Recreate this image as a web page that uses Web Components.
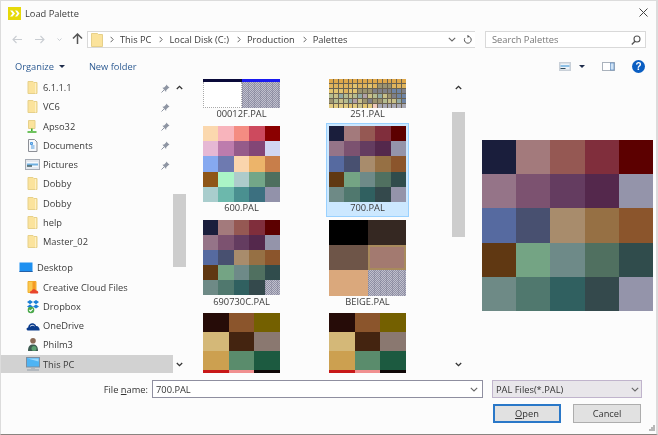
<!DOCTYPE html>
<html>
<head>
<meta charset="utf-8">
<title>Load Palette</title>
<style>
    html, body { margin: 0; padding: 0; background: #fff; }
    body { font-family: "Open Sans", "Noto Sans", sans-serif; }
</style>
</head>
<body>
<file-dialog>
    <dialog-title slot="title">Load Palette</dialog-title>
    <nav-bar slot="nav"></nav-bar>
    <tool-bar slot="tools"></tool-bar>
    <nav-tree slot="tree">
        <tree-row icon="folder" pin>6.1.1.1</tree-row>
        <tree-row icon="folder" pin>VC6</tree-row>
        <tree-row icon="share" pin>Apso32</tree-row>
        <tree-row icon="docs" pin>Documents</tree-row>
        <tree-row icon="pics" pin>Pictures</tree-row>
        <tree-row icon="folder">Dobby</tree-row>
        <tree-row icon="folder">Dobby</tree-row>
        <tree-row icon="folder">help</tree-row>
        <tree-row icon="folder">Master_02</tree-row>
        <tree-row icon="desktop" top>Desktop</tree-row>
        <tree-row icon="cloudfiles">Creative Cloud Files</tree-row>
        <tree-row icon="dropbox">Dropbox</tree-row>
        <tree-row icon="onedrive">OneDrive</tree-row>
        <tree-row icon="user">Philm3</tree-row>
        <tree-row icon="pc" selected>This PC</tree-row>
    </nav-tree>
    <scroll-bar slot="treebar" before="104" size="73"></scroll-bar>
    <pal-list slot="list">
        <pal-item kind="bars">00012F.PAL</pal-item>
        <pal-item kind="swatch251">251.PAL</pal-item>
        <pal-item kind="p600">600.PAL</pal-item>
        <pal-item kind="p700" selected>700.PAL</pal-item>
        <pal-item kind="p690">690730C.PAL</pal-item>
        <pal-item kind="beige">BEIGE.PAL</pal-item>
        <pal-item kind="earth"></pal-item>
        <pal-item kind="earth"></pal-item>
    </pal-list>
    <scroll-bar slot="listbar" before="22" size="125"></scroll-bar>
    <pal-preview slot="preview" kind="p700"></pal-preview>
    <dialog-footer slot="footer"></dialog-footer>
</file-dialog>

<script>
"use strict";

// all the small inline icons, keyed by name.
const folder = (x = 0) => `<path d="M${x + 1.5} 1.5h5l1 1h3v11h-9z" fill="#fbe39c" stroke="#e6d08a"/><path d="M${x + 9} 3v10.5" stroke="#fdf0c4"/>`;
const ICONS = {
    folder: `<svg viewBox="0 0 14 15" width="14" height="15">${folder(.5)}</svg>`,
    share: `<svg viewBox="0 0 14 15" width="14" height="15"><path d="M2.500 1.500h6.500v8h-6.500z" fill="#fbe39c" stroke="#e6d08a"/><path d="M5.800 9.500v2.500M1.500 13h9" stroke="#3fae2a" stroke-width="1.600" fill="none"/></svg>`,
    docs: `<svg viewBox="0 0 14 15" width="14" height="15"><path d="M2.500 1.500h6l2.500 2.500v9.500h-8.500z" fill="#f6f8fb" stroke="#8c8f96"/><path d="M4.500 4.500h2v2h-2zM5 8h3.500M5 10h3.500" stroke="#4f9be0" fill="#9cc8f0"/></svg>`,
    pics: `<svg viewBox="0 0 16 13" width="16" height="13"><rect x=".5" y="1.500" width="14" height="10" fill="#e4e8ee" stroke="#a5abb4"/><rect x="2" y="4" width="11" height="5" fill="#f5f8fb"/><path d="M2 6.500h11" stroke="#6fb0e0" stroke-width="2"/><path d="M2 8h5" stroke="#3c5a60" stroke-width="1.500"/></svg>`,
    desktop: `<svg viewBox="0 0 14 11" width="14" height="11"><rect x=".5" y=".5" width="13" height="9.500" fill="#1e90f0"/><path d="M.5 9.500h13" stroke="#2460a8"/></svg>`,
    cloudfiles: `<svg viewBox="0 0 14 15" width="14" height="15"><path d="M2 1.500h8v11h-8z" fill="#fbc94f" stroke="#f0b030"/><path d="M6.500 2l3-1v11h-3z" fill="#f59a23"/><path d="M5 13.500c-1.500 0-1.500-2.500.5-2.500 .5-2 3.500-2.500 4.500-.5 2-.5 3.500 3 1 3z" fill="#e8452c"/></svg>`,
    dropbox: `<svg viewBox="0 0 14 15" width="14" height="15"><path d="M4 1l3 2-3 2.200L1 3zM10 1l3 2-3 2.200L7 3zM4 5.400l3 2-3 2.100-3-2.100zM10 5.400l3 2-3 2.100-3-2.100z" fill="#1a7fd6"/><circle cx="5" cy="11" r="3.300" fill="#4aa84a"/><path d="M3.300 11l1.300 1.200 2.200-2.400" fill="none" stroke="#fff" stroke-width="1.100"/></svg>`,
    onedrive: `<svg viewBox="0 0 14 10" width="14" height="10"><path d="M1.500 9.500c-1.500-.5-1.200-3 .6-3 .3-2.800 3-5 5.600-4 1.300.4 2 1.300 2.400 2.400 2.200-.3 4 2.800 3.400 4.600z" fill="#0c3c8c"/><path d="M4 5.500c1-1.200 3-1.700 4.500-.5" stroke="#fff" stroke-width=".8" fill="none"/></svg>`,
    user: `<svg viewBox="0 0 14 15" width="14" height="15"><circle cx="7" cy="3.800" r="2.800" fill="#8a6a56"/><path d="M2 14c0-5 2-6.500 5-6.500s5 1.500 5 6.500z" fill="#3c5a50"/><circle cx="8" cy="11.500" r="2.500" fill="#5aa070"/></svg>`,
    pc: `<svg viewBox="0 0 16 14" width="16" height="14"><rect x="1.500" y=".5" width="13" height="9.500" fill="#4fb4f4" stroke="#7c8ea0"/><path d="M2.500 1.500h11v3z" fill="#9bd8fb"/><path d="M6 11h4M2 13h12" stroke="#a8b0b8" stroke-width="1.400"/></svg>`,
    pin: `<svg viewBox="0 0 9 9" width="9" height="9"><path d="M5.200.5l3.300 3.300-1.200.5-2 2-.2 1.700L1.400 3.800l1.700-.2 2-2z" fill="#8e95a3"/><path d="M.5 8.500l2.500-2.500" stroke="#8e95a3"/></svg>`,
    up: `<svg viewBox="0 0 7 5" width="7" height="5"><path d="M.8 4L3.500 1.300 6.200 4" fill="none" stroke="#333" stroke-width="1.300"/></svg>`,
    down: `<svg viewBox="0 0 7 5" width="7" height="5"><path d="M.8 1L3.500 3.700 6.200 1" fill="none" stroke="#333" stroke-width="1.300"/></svg>`,
    chevron: `<svg viewBox="0 0 8 5" width="8" height="5"><path d="M.8 .8L4 4 7.200 .8" fill="none" stroke="#666" stroke-width="1.100"/></svg>`,
    crumb: `<svg viewBox="0 0 4 7" width="4" height="7"><path d="M.6 .8L3.200 3.500 .6 6.200" fill="none" stroke="#666"/></svg>`
};

// dialog frame, everything else goes in through slots.
const dialogTemp = document.createElement('template');
dialogTemp.innerHTML = `
<style>
    :host {
        display: flex;
        flex-flow: column nowrap;
        box-sizing: border-box;
        width: 658px;
        height: 435px;
        background: #fcfcfc;
        color: #333;
        font: 9.3px "Open Sans", "Noto Sans", sans-serif;
        border: 1px solid #dcdcdc;
        border-width: 1px 2px 1px 1px;
        border-bottom: 1px solid #8a8480;
        overflow: hidden;
        filter: blur(0.3px);
    }
    main {
        display: flex;
        height: 294px;
        flex: none;
    }
</style>
<slot name="title"></slot>
<slot name="nav"></slot>
<slot name="tools"></slot>
<main>
    <slot name="tree"></slot>
    <slot name="treebar"></slot>
    <slot name="list"></slot>
    <slot name="listbar"></slot>
    <slot name="preview"></slot>
</main>
<slot name="footer"></slot>
`;
class FileDialog extends HTMLElement {
    constructor() {
        super();
        this.attachShadow({ mode: 'open' });
        this.shadowRoot.appendChild(dialogTemp.content.cloneNode(true));
    }
}
customElements.define('file-dialog', FileDialog);

// title bar
class DialogTitle extends HTMLElement {
    constructor() {
        super();
        this.attachShadow({ mode: 'open' }).innerHTML = `
        <style>
            :host { display: flex; align-items: center; height: 25px; padding: 0 8px 0 7px; box-sizing: border-box; flex: none; }
            svg { flex: none; margin-right: 4px; }
            span { flex: 1; color: #3a3a3a; }
        </style>
        <svg viewBox="0 0 13 13" width="13" height="13">
            <rect width="13" height="13" fill="#e6d90a"/>
            <path d="M2 3.500h2.500l2.500 3-2.500 3H2l2.500-3zM7 3.500h2.200l2.300 3-2.300 3H7l2.300-3z" fill="#fff"/>
        </svg>
        <span><slot></slot></span>
        <svg viewBox="0 0 9 9" width="9" height="9" style="margin:-3px 0 0"><path d="M.5 .5l8 8M8.500 .5l-8 8" stroke="#444" fill="none"/></svg>`;
    }
}
customElements.define('dialog-title', DialogTitle);

// back / forward / up plus address and search boxes
class NavBar extends HTMLElement {
    constructor() {
        super();
        const crumbs = ['This PC', 'Local Disk (C:)', 'Production', 'Palettes'];
        this.attachShadow({ mode: 'open' }).innerHTML = `
        <style>
            :host { display: flex; align-items: center; height: 17px; margin-top: 5px; padding-left: 10px; flex: none; }
            .btn { display: flex; flex: none; }
            .addr {
                display: flex; align-items: center; box-sizing: border-box;
                width: 388px; height: 17px; margin-left: 4px;
                border: 1px solid #d9d9d9; border-right: 0; background: #fff;
                padding-left: 3px; color: #3a3a3a;
            }
            .addr i { display: flex; margin: 0 6px 0 8px; }
            .addr i:first-of-type { margin-left: 7px; }
            .addr .end { margin-left: auto; display: flex; align-items: center; gap: 7px; padding-right: 3px; }
            .search {
                display: flex; align-items: center; justify-content: space-between; box-sizing: border-box;
                width: 161px; height: 17px; margin-left: 10px; padding: 0 4px 0 6px;
                border: 1px solid #d9d9d9; background: #fff; color: #777;
            }
        </style>
        <span class="btn" style="margin-left:1px"><svg viewBox="0 0 10 9" width="10" height="9"><path d="M10 4.500H1M4.500 1L1 4.500 4.500 8" fill="none" stroke="#c9cdd2" stroke-width="1.100"/></svg></span>
        <span class="btn" style="margin-left:13px"><svg viewBox="0 0 10 9" width="10" height="9"><path d="M0 4.500h9M5.500 1L9 4.500 5.500 8" fill="none" stroke="#c9cdd2" stroke-width="1.100"/></svg></span>
        <span class="btn" style="margin-left:12px"><svg viewBox="0 0 5 3" width="5" height="3"><path d="M.5 .5l2 2 2-2" fill="none" stroke="#c9cdd2"/></svg></span>
        <span class="btn" style="margin:-2px 0 0 10px"><svg viewBox="0 0 11 11" width="11" height="11"><path d="M5.500 11V1M1 5.500L5.500 1 10 5.500" fill="none" stroke="#555" stroke-width="1.500"/></svg></span>
        <div class="addr">
            <svg viewBox="0 0 12 14" width="12" height="14"><path d="M.5 .5h6l1 1h4v12h-11z" fill="#fbe39c" stroke="#e6d08a"/></svg>
            ${crumbs.map(c => `<i>${ICONS.crumb}</i><span>${c}</span>`).join('')}
            <span class="end">${ICONS.chevron}
                <svg viewBox="0 0 10 10" width="9" height="9"><path d="M5.500 1.500a3.800 3.800 0 1 1-3.500 2M5.500 0v3" fill="none" stroke="#555" stroke-width="1.100"/></svg>
            </span>
        </div>
        <div class="search"><span>Search Palettes</span>
            <svg viewBox="0 0 10 10" width="10" height="10"><circle cx="6" cy="4" r="3" fill="none" stroke="#555" stroke-width="1.100"/><path d="M4 6.200L.8 9.400" stroke="#555" stroke-width="1.400"/></svg>
        </div>`;
    }
}
customElements.define('nav-bar', NavBar);

// Organize row
class ToolBar extends HTMLElement {
    constructor() {
        super();
        this.attachShadow({ mode: 'open' }).innerHTML = `
        <style>
            :host { display: flex; align-items: center; height: 31px; padding: 5px 11px 0 14px; color: #2c5a92; flex: none; box-sizing: border-box; }
            .arrow { width: 0; height: 0; border: 3px solid transparent; border-top: 3px solid #1d2b4a; border-bottom: 0; margin-left: 5px; }
            .folder { margin-left: 24px; flex: 1; }
            .views { display: flex; align-items: center; }
        </style>
        <span>Organize</span><span class="arrow"></span>
        <span class="folder">New folder</span>
        <div class="views">
            <svg viewBox="0 0 12 9" width="12" height="9"><rect width="12" height="9" fill="#c9d0d8"/><rect x="1.500" y="1.500" width="9" height="6" fill="#eef3f8"/><path d="M1.500 4h9" stroke="#6fb0e0" stroke-width="1.500"/><path d="M1.500 6.500h5" stroke="#2f4858"/></svg>
            <span class="arrow" style="margin-left:8px;border-width:3px 3px 0"></span>
            <svg viewBox="0 0 13 9" width="13" height="9" style="margin-left:17px"><rect x=".5" y=".5" width="12" height="8" fill="#fff" stroke="#aab2bc"/><rect x="8.500" y="1" width="3.500" height="7" fill="#cfe3f6" stroke="#4d7fb8" stroke-width=".6"/></svg>
            <svg viewBox="0 0 13 13" width="13" height="13" style="margin-left:17px"><circle cx="6.500" cy="6.500" r="6.500" fill="#0a5ec2"/><text x="6.500" y="10.200" text-anchor="middle" font-family="Liberation Sans" font-weight="700" font-size="10" fill="#fff">?</text></svg>
        </div>`;
    }
}
customElements.define('tool-bar', ToolBar);

// navigation tree
class NavTree extends HTMLElement {
    constructor() {
        super();
        this.attachShadow({ mode: 'open' }).innerHTML = `
        <style>
            :host { display: block; width: 172px; flex: none; overflow: hidden; margin-top: -1px; }
        </style>
        <slot></slot>`;
    }
}
customElements.define('nav-tree', NavTree);

class TreeRow extends HTMLElement {
    constructor() {
        super();
        this.attachShadow({ mode: 'open' });
    }
    connectedCallback() {
        const icon = this.getAttribute('icon');
        const isTop = this.hasAttribute('top');
        this.shadowRoot.innerHTML = `
        <style>
            :host { display: flex; align-items: center; height: 19.25px; box-sizing: border-box; color: #3a3a3a; white-space: nowrap; }
            :host([top]) { margin-top: 7px; }
            :host([selected]) { background: #d2d2d2; }
            .ico { display: flex; justify-content: center; align-items: center; width: 16px; flex: none; margin-left: ${isTop ? 17 : 24}px; margin-right: ${isTop ? 3 : 2}px; }
            .txt { flex: 1; }
            .pin { display: flex; margin-right: 3px; margin-top: 1px; }
        </style>
        <span class="ico">${ICONS[icon]}</span>
        <span class="txt"><slot></slot></span>
        ${this.hasAttribute('pin') ? `<span class="pin">${ICONS.pin}</span>` : ''}`;
    }
}
customElements.define('tree-row', TreeRow);

// plain scrollbar, the thumb sits in the flow after a spacer
class ScrollBar extends HTMLElement {
    constructor() {
        super();
        this.attachShadow({ mode: 'open' });
    }
    connectedCallback() {
        const before = this.getAttribute('before');
        const size = this.getAttribute('size');
        this.shadowRoot.innerHTML = `
        <style>
            :host { display: flex; flex-flow: column nowrap; align-items: center; width: 13px; flex: none; }
            .thumb { width: 100%; background: #cdcdcd; height: ${size}px; margin-top: ${before}px; }
            .a { display: flex; height: 9px; align-items: flex-end; margin-top: 2px; }
            .b { display: flex; margin-top: auto; margin-bottom: 6px; }
        </style>
        <span class="a">${ICONS.up}</span>
        <div class="thumb"></div>
        <span class="b">${ICONS.down}</span>`;
    }
}
customElements.define('scroll-bar', ScrollBar);

// palette data for the thumbnails
const DITHER = 'dither';
const EDGED = 'edged';
const P700 = [
    '#1a1e3c', '#a37a7c', '#955853', '#802e3c', '#5c0000',
    '#957488', '#7c5270', '#643c60', '#54284c', '#9494aa',
    '#566aa0', '#485070', '#a88c6c', '#967044', '#8b552c',
    '#603812', '#74a484', '#6e8a88', '#507060', '#304c4c',
    '#6e8a86', '#50786e', '#306060', '#34494c', '#9494aa'
];
const PALS = {
    p700: { cols: 5, rows: 5, cells: P700 },
    p690: { cols: 5, rows: 5, cells: P700.slice(0, 24).concat(DITHER) },
    p600: { cols: 5, rows: 5, cells: [
        '#fbd8ae', '#f8b4bc', '#f48c82', '#cd4a5e', '#8b0000',
        '#e6b8d4', '#bd7cad', '#955b8a', '#834676', '#d0d6f2',
        '#86a9f0', '#6e7ab0', '#fad5ad', '#ecb46a', '#c87e4a',
        '#8f5618', '#aaf4c6', '#aecbcb', '#73a688', '#4e6f5e',
        '#a9cdcd', '#6cb8ac', '#4a9090', '#3c7080', '#9292aa'
    ] },
    beige: { cols: 2, rows: 3, cells: ['#000000', '#352822', '#6e5548', EDGED, '#daa87c', DITHER] },
    earth: { cols: 3, rows: 4, rowSize: '19px', cells: [
        '#260c08', '#8b552c', '#746000',
        '#d4b878', '#442410', '#8a7870',
        '#cca050', '#5a8c6c', '#1c5a40',
        '#c81818', '#f09090', '#100808'
    ] }
};

// 251.PAL is a tiny 16x6 chart, one letter per cell
const TONES = { a: '#dfa84a', b: '#e0b45c', c: '#e2c470', d: '#9c9470', e: '#7f8088', f: '#b4bc90', g: '#c8c088', h: '#92aaa4', i: '#e0ca80', j: '#f0cabc', k: '#6f84a4', l: '#b0a0a8', z: '#a8a8b4' };
const CHART = [
    'aaaaaaaaaaaaaaaa',
    'bbbbbcbbcbdddbbb',
    'cccbccdddeeeekke',
    'fghfgfhlgfhgdekk',
    'dfgfhlgdeddfgghk',
    'iiiicigcijzzzzzz'
];

class PalSwatch extends HTMLElement {
    constructor() {
        super();
        this.attachShadow({ mode: 'open' });
    }
    connectedCallback() {
        const kind = this.getAttribute('kind');
        let body = '';
        if (kind === 'bars') {
            body = `<div class="bars"><i style="background:#0a0a3a"></i><i style="background:#1a1af0"></i>
                <b></b><u class="dither"></u></div>`;
        } else if (kind === 'swatch251') {
            const cells = CHART.join('').split('').map(t => `<i style="background:${TONES[t]}"></i>`).join('');
            body = `<div class="fine">${cells}</div>`;
        } else {
            const pal = PALS[kind];
            const cells = pal.cells.map(c => {
                if (c === DITHER) return '<i class="dither"></i>';
                if (c === EDGED) return '<i class="edged"></i>';
                return `<i style="background:${c}"></i>`;
            }).join('');
            body = `<div class="cells" style="grid-template-columns:repeat(${pal.cols},1fr);grid-template-rows:repeat(${pal.rows},${pal.rowSize || '1fr'})">${cells}</div>`;
        }
        this.shadowRoot.innerHTML = `
        <style>
            :host { display: block; overflow: hidden; }
            .cells { display: grid; width: 100%; height: 100%; }
            .dither {
                background:
                    repeating-linear-gradient(90deg, rgba(60, 60, 90, .14) 0 1px, transparent 1px 6px),
                    repeating-conic-gradient(#9090a6 0 25%, #c0c0cc 0 50%) 0 0 / 2px 2px;
            }
            .edged { background: #a37a70; border: 2px solid #a88a5c; box-sizing: border-box; }
            .bars { display: grid; grid-template: 3px 1fr / 1fr 1fr; height: 100%; }
            .bars b { background: #fff; border: 1px dotted #aaa; border-width: 0 1px 1px; }
            .fine { display: grid; grid-template-columns: repeat(16, 1fr); grid-template-rows: repeat(6, 1fr); gap: 1px; height: 100%; background: #6a6250; }
        </style>${body}`;
    }
}
customElements.define('pal-swatch', PalSwatch);

// the thumbnails view
class PalList extends HTMLElement {
    constructor() {
        super();
        this.attachShadow({ mode: 'open' }).innerHTML = `
        <style>
            :host {
                display: grid; grid-template-columns: 83px 83px; column-gap: 43px;
                grid-auto-rows: 93.5px; grid-template-rows: 44px;
                align-content: start; padding-left: 14px; width: 266px; box-sizing: border-box;
                height: 294px; overflow: hidden; flex: none;
            }
        </style>
        <slot></slot>`;
    }
}
customElements.define('pal-list', PalList);

class PalItem extends HTMLElement {
    constructor() {
        super();
        this.attachShadow({ mode: 'open' });
    }
    connectedCallback() {
        const kind = this.getAttribute('kind');
        const h = (kind === 'bars' || kind === 'swatch251') ? 29 : 76;
        this.shadowRoot.innerHTML = `
        <style>
            :host { display: block; box-sizing: border-box; padding: 2px 2px 0; border: 1px solid transparent; text-align: center; color: #3a3a3a; }
            :host([kind=bars]), :host([kind=swatch251]) { padding-top: 0; border-top: 0; }
            :host([selected]) { background: #cce8ff; border-color: #99d1ff; }
            pal-swatch { width: 77px; height: ${h}px; }
            div { line-height: 12px; margin-top: 0; }
        </style>
        <pal-swatch kind="${kind}"></pal-swatch>
        <div><slot></slot></div>`;
    }
}
customElements.define('pal-item', PalItem);

// big preview on the right
class PalPreview extends HTMLElement {
    constructor() {
        super();
        this.attachShadow({ mode: 'open' }).innerHTML = `
        <style>
            :host { display: block; flex: none; margin: 61px 0 0 17px; }
            pal-swatch { width: 171px; height: 171px; }
        </style>
        <pal-swatch kind="${this.getAttribute('kind')}"></pal-swatch>`;
    }
}
customElements.define('pal-preview', PalPreview);

// file name, filter and the buttons
class DialogFooter extends HTMLElement {
    constructor() {
        super();
        this.attachShadow({ mode: 'open' }).innerHTML = `
        <style>
            :host { display: block; flex: 1; color: #333; }
            .row { display: flex; align-items: center; margin-top: 7px; height: 18px; }
            label { width: 147px; text-align: right; margin-right: 4px; flex: none; }
            .box {
                display: flex; align-items: center; justify-content: space-between; box-sizing: border-box; height: 18px;
                border: 1px solid #8f8fa0; background: #fff; padding: 0 4px 0 3px; flex: none;
            }
            .name { width: 331px; }
            .filter { width: 150px; margin-left: 9px; background: #e8e6ea; border-color: #c0b4cc; padding-right: 2px; }
            .btns { display: flex; gap: 12px; padding-left: 492px; margin-top: 6px; position: relative; }
            button {
                box-sizing: border-box; width: 68px; height: 19px; padding: 0; font: inherit; color: #333;
                background: #e1e1e1; border: 1px solid #adadad;
            }
            button.ok { border: 1px solid #2a78c8; box-shadow: inset 0 0 0 1px #2a78c8; }
            .grip { position: absolute; right: 1px; top: 21px; display: flex; }
        </style>
        <div class="row">
            <label>File <u>n</u>ame:</label>
            <div class="box name"><span>700.PAL</span>${ICONS.chevron}</div>
            <div class="box filter"><span>PAL Files(*.PAL)</span>${ICONS.chevron}</div>
        </div>
        <div class="btns">
            <button class="ok"><u>O</u>pen</button>
            <button>Cancel</button>
            <span class="grip"><svg viewBox="0 0 6 6" width="6" height="6"><path d="M4 0h2v2H4zM2 2h2v2H2zM4 2h2v2H4zM0 4h2v2H0zM2 4h2v2H2zM4 4h2v2H4z" fill="#b8b8b8"/></svg></span>
        </div>`;
    }
}
customElements.define('dialog-footer', DialogFooter);
</script>
</body>
</html>
